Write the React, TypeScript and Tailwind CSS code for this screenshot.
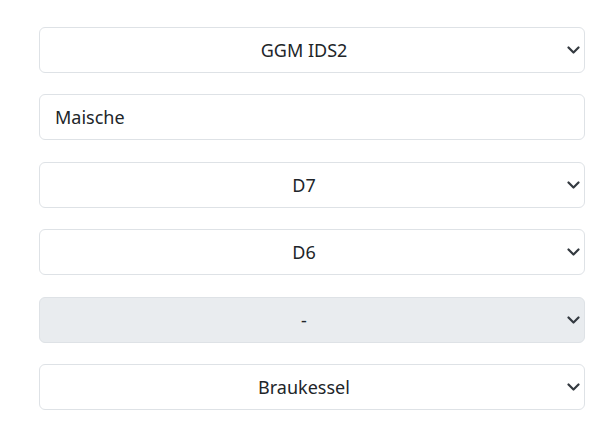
import React, { type JSX } from "react";

type Field = {
  kind: "select" | "input";
  value: string;
  disabled?: boolean;
};

const fields: Field[] = [
  { kind: "select", value: "GGM IDS2" },
  { kind: "input", value: "Maische" },
  { kind: "select", value: "D7" },
  { kind: "select", value: "D6" },
  { kind: "select", value: "-", disabled: true },
  { kind: "select", value: "Braukessel" },
];

function Chevron(): JSX.Element {
  return (
    <svg
      className="absolute right-[4px] top-1/2 -translate-y-1/2"
      width="13"
      height="8"
      viewBox="0 0 13 8"
      fill="none"
    >
      <path d="m1.5 1.5 5 5 5-5" stroke="#343a40" strokeWidth="2.2" strokeLinecap="round" strokeLinejoin="round" />
    </svg>
  );
}

function FieldBox({ field }: { field: Field }): JSX.Element {
  return (
    <div
      className={[
        "relative flex h-[46px] items-center rounded-[6px] border border-[#dee2e6] text-[18px] text-[#212529]",
        field.disabled ? "bg-[#e9ecef]" : "bg-white",
        field.kind === "select" ? "justify-center pl-3 pr-[28px]" : "px-[15px]",
      ].join(" ")}
    >
      <span className="leading-none">{field.value}</span>
      {field.kind === "select" ? <Chevron /> : null}
    </div>
  );
}

export default function App(): JSX.Element {
  return (
    <div
      className="min-h-[445px] w-[598px] bg-white pl-[39px] pr-[13px] pt-[27px]"
      style={{ fontFamily: '"Noto Sans", "Open Sans", sans-serif' }}
    >
      <div className="flex flex-col gap-[21.4px]">
        {fields.map((f, i) => (
          <FieldBox key={i} field={f} />
        ))}
      </div>
    </div>
  );
}
